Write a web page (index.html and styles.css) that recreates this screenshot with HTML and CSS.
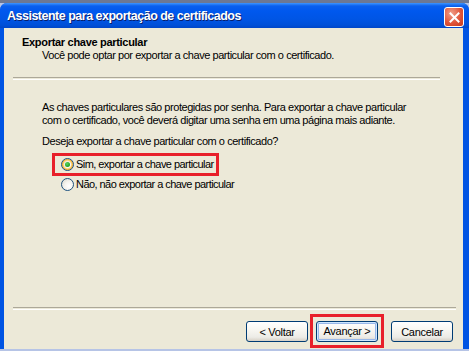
FILE: index.html
```html
<!DOCTYPE html>
<html lang="pt-BR">
<head>
    <meta charset="UTF-8">
    <title>Assistente para exportação de certificados</title>
    <link rel="stylesheet" href="styles.css">
</head>
<body>
    <div class="window">
        <div class="titlebar">
            <span class="title-text">Assistente para exportação de certificados</span>
            <button class="close-btn" aria-label="Fechar">
                <svg width="11" height="11" viewBox="0 0 11 11">
                    <path d="M1.5 1.5 L9.5 9.5 M9.5 1.5 L1.5 9.5" stroke="#fff" stroke-width="2" stroke-linecap="square"></path>
                </svg>
            </button>
        </div>
        <div class="client">
            <div class="header">
                <div class="header-title">Exportar chave particular</div>
                <div class="header-sub">Você pode optar por exportar a chave particular com o certificado.</div>
            </div>
            <div class="sep sep-top"></div>

            <div class="content">
                <p class="info">As chaves particulares são protegidas por senha. Para exportar a chave particular<br>com o certificado, você deverá digitar uma senha em uma página mais adiante.</p>
                <p class="question">Deseja exportar a chave particular com o certificado?</p>

                <div class="options">
                    <div class="highlight">
                        <label class="radio-row">
                            <span class="radio checked hot"></span>
                            <span>Sim, exportar a chave particular</span>
                        </label>
                    </div>
                    <label class="radio-row">
                        <span class="radio"></span>
                        <span>Não, não exportar a chave particular</span>
                    </label>
                </div>
            </div>

            <div class="footer">
                <div class="sep"></div>
                <div class="buttons">
                    <button class="btn">&lt; Voltar</button>
                    <div class="highlight btn-highlight">
                        <button class="btn btn-default">Avançar &gt;</button>
                    </div>
                    <button class="btn btn-cancel">Cancelar</button>
                </div>
            </div>
        </div>
    </div>
</body>
</html>
```

FILE: styles.css
```css
/* page */
html, body {
    margin: 0;
    height: 100%;
}

body {
    background: linear-gradient(#6d7893 0, #6d7893 3px, #b6c4e6 3px);
    font-family: "Liberation Sans", Arial, sans-serif;
    font-size: 11px;
    letter-spacing: -0.45px;
    color: #000;
    overflow: hidden;
}

/* window frame */
.window {
    margin-top: 3px;
    height: 346px;
    width: 469px;
    background: #0054e3;
    border-radius: 7px 7px 0 0;
    display: flex;
    flex-direction: column;
}

.titlebar {
    height: 25px;
    display: flex;
    align-items: center;
    justify-content: space-between;
    padding: 0 5px 0 7px;
    border-radius: 7px 7px 0 0;
    background: linear-gradient(#3d95ff 0, #0a5fed 3px, #0058ee 8px, #0055e5 16px, #0050d8 22px, #0046c8 25px);
}

.title-text {
    color: #fff;
    font-family: "Liberation Sans", Arial, sans-serif;
    font-weight: bold;
    font-size: 12.5px;
    letter-spacing: -0.5px;
    text-shadow: 1px 1px 0 #0a1e6a;
    margin-top: 1px;
}

.close-btn {
    width: 20px;
    height: 20px;
    margin-top: 3px;
    padding: 0;
    border: 1px solid #fff;
    border-radius: 3px;
    background: radial-gradient(circle at 35% 30%, #f0a08a 0, #e0553a 55%, #c63a1c 100%);
    display: flex;
    align-items: center;
    justify-content: center;
}

/* client area */
.client {
    flex: 1;
    margin: 0 6px 0 4px;
    background: #ece9d8;
    display: flex;
    flex-direction: column;
    line-height: 13px;
}

.header {
    padding-top: 8px;
}

.header-title {
    font-weight: bold;
    padding-left: 18px;
    letter-spacing: -0.3px;
}

.header-sub {
    padding-left: 38px;
}

.sep {
    height: 1px;
    border-top: 1px solid #aca899;
    border-bottom: 1px solid #fff;
    margin-left: 9px;
}

.sep-top {
    margin-top: 15px;
    margin-right: 23px;
}

.content {
    padding-left: 38px;
}

.content p {
    margin: 0;
}

.info {
    margin-top: 21px !important;
}

.question {
    margin-top: 8px !important;
}

.options {
    margin-top: 5px;
    display: flex;
    flex-direction: column;
}

.highlight {
    border: 3px solid #e8202a;
}

.options .highlight {
    align-self: flex-start;
    margin-left: 10px;
    padding: 1px 2px 1px 6px;
    white-space: nowrap;
}

.radio-row {
    display: flex;
    align-items: center;
    gap: 2px;
    height: 15px;
    white-space: nowrap;
    letter-spacing: -0.55px;
}

.options > .radio-row {
    margin-left: 19px;
    margin-top: 1px;
}

.radio {
    width: 11px;
    height: 11px;
    border: 1px solid #1c5180;
    border-radius: 50%;
    background: radial-gradient(circle at 65% 65%, #fff 0, #f4f3ee 45%, #d6d4c8 100%);
    display: flex;
    align-items: center;
    justify-content: center;
    flex-shrink: 0;
}

.radio.hot {
    box-shadow: inset 0 0 0 1px #f8b330, inset 0 0 0 2px #fdd889;
}

.radio.checked::after {
    content: "";
    width: 5px;
    height: 5px;
    border-radius: 50%;
    background: radial-gradient(circle at 40% 35%, #5ed35e 0, #21a121 70%);
}

/* footer */
.footer {
    margin-top: auto;
}

.footer .sep {
    margin-right: 7px;
}

.buttons {
    display: flex;
    justify-content: flex-end;
    align-items: center;
    padding: 11px 10px 7px 0;
}

.btn {
    width: 62px;
    height: 21px;
    padding: 0;
    font-family: "Liberation Sans", Arial, sans-serif;
    font-size: 11px;
    letter-spacing: -0.3px;
    color: #000;
    border: 1px solid #003c74;
    border-radius: 3px;
    background: linear-gradient(#ffffff 0, #f8f7f2 40%, #ecebe6 80%, #d6d0c5 100%);
}

.btn-highlight {
    margin: -8px 0 -6px 2px;
    padding: 4px 3px 3px 3px;
}

.btn-default {
    box-shadow: inset 0 0 0 1px #cee7ff, inset 0 0 0 2px #98b8ea;
}

.btn-cancel {
    margin-left: 7px;
}
```
